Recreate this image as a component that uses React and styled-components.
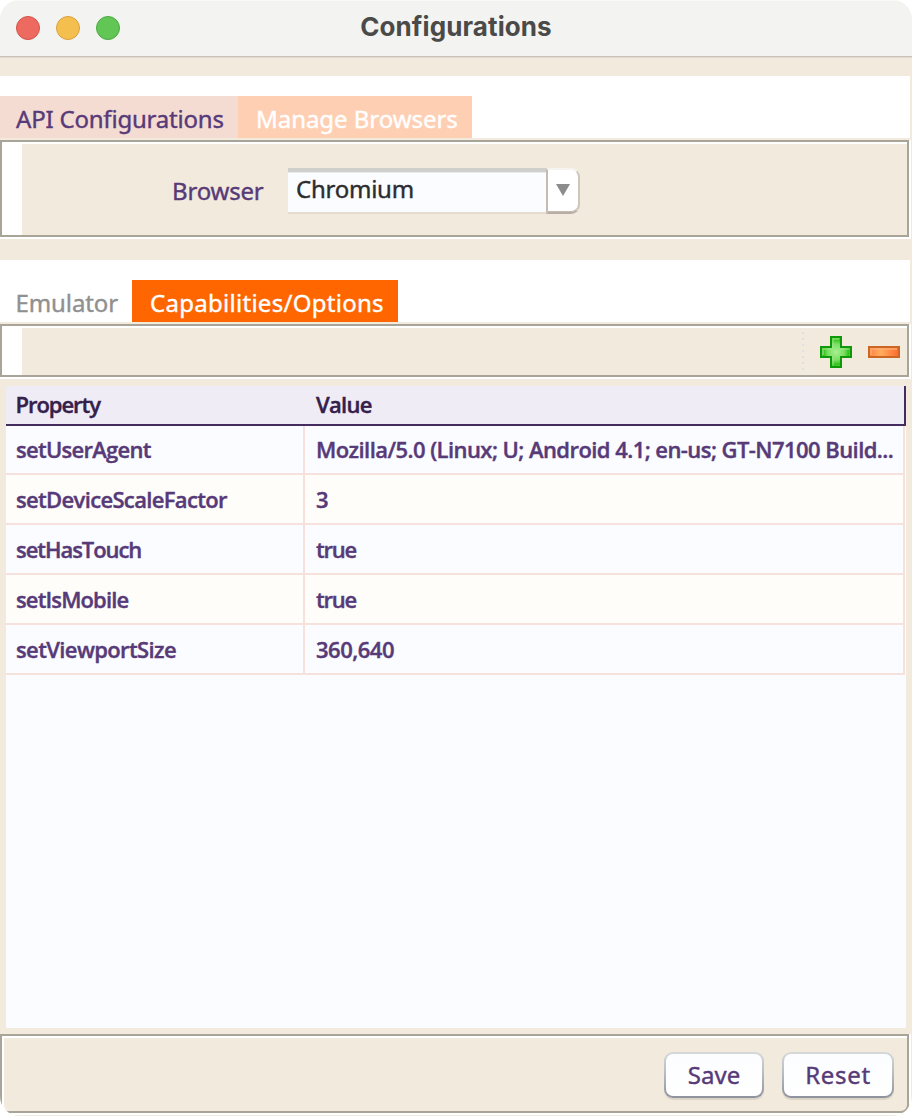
import React from 'react';
import styled, { createGlobalStyle } from 'styled-components';

const sand = '#f2eadd';
const plum = '#573a78';

const GlobalStyle = createGlobalStyle`
  * { box-sizing: border-box; }
  body { margin: 0; background: #fff; }
`;

const Window = styled.main`
  width: 912px;
  height: 1116px;
  display: flex;
  flex-direction: column;
  overflow: hidden;
  background: ${sand};
  border-radius: 20px;
  font-family: 'Noto Sans', sans-serif;
  font-size: 24px;
  color: ${plum};
  white-space: pre;
  -webkit-text-stroke: 0.4px currentColor;
`;

const TitleBar = styled.header`
  height: 58px;
  flex: none;
  display: grid;
  grid-template-columns: 160px 1fr 160px;
  align-items: center;
  padding-bottom: 3px;
  background: #f3f3f1;
  border-top: 1px solid #fafafa;
  box-shadow: inset 0 -1px #e0d8cc, inset 0 -2px #c9c3b9;
  -webkit-text-stroke: 0;
`;

const Lights = styled.div`
  display: flex;
  gap: 16px;
  padding-left: 16px;
`;

const Light = styled.span`
  width: 24px;
  height: 24px;
  border-radius: 50%;
  background: ${(p) => p.$fill};
  border: 1px solid ${(p) => p.$edge};
`;

const Title = styled.h1`
  margin: 0;
  padding-bottom: 2px;
  text-align: center;
  font: 700 26px/32px Inter, sans-serif;
  letter-spacing: ${(p) => p.$track}px;
  color: #4a4a48;
`;

const TabStrip = styled.nav`
  width: 910px;
  height: 62px;
  flex: none;
  display: flex;
  align-items: flex-end;
  margin-top: ${(p) => p.$top}px;
  margin-bottom: 2px;
  background: #fff;
`;

const Tab = styled.div`
  width: ${(p) => p.$width}px;
  height: 42px;
  padding-left: ${(p) => p.$inset}px;
  line-height: 45px;
  background: ${(p) => p.$fill};
  color: ${(p) => p.$color};
  letter-spacing: ${(p) => p.$track || 0}px;
`;

const PanelEdge = styled.section`
  width: 911px;
  height: ${(p) => p.$height}px;
  flex: none;
  border: solid #fff;
  border-width: 0 2px 2px 0;
`;

const Panel = styled.div`
  height: 100%;
  display: flex;
  align-items: center;
  border: 2px solid #a8a598;
  box-shadow: inset 0 2px #fff, inset ${(p) => p.$gutter}px 0 #fff;
  justify-content: ${(p) => p.$justify || 'flex-start'};
`;

const FooterPanel = styled(Panel)`
  border-radius: 0 0 8px 8px;
  padding: 0 13px 0 0;
  gap: 18px;
`;

const FieldLabel = styled.label`
  width: 116px;
  margin-left: 170px;
  padding-top: 4px;
  letter-spacing: -0.2px;
`;

const Combo = styled.div`
  display: flex;
  width: 292px;
  height: 46px;
  margin-top: 5px;
`;

const ComboValue = styled.div`
  width: 258px;
  padding-left: 8px;
  line-height: 34px;
  color: #2c2c30;
  letter-spacing: -0.25px;
  background: #fbfcff;
  border-top: 4px solid #cfd0ce;
  border-bottom: 2px solid #e3dccf;
  box-shadow: inset 0 1px #e8ebea;
`;

const ComboButton = styled.div`
  width: 34px;
  display: grid;
  place-items: center;
  padding-bottom: 3px;
  background: #fff;
  border: solid #b9ada4;
  border-width: 2px;
  border-color: #f6f4f1 #cfc7be #b9ada4 #c5bbb2;
  border-radius: 0 9px 9px 0;
  box-shadow: inset 0 -1px #c2b9b1;
`;

const Tools = styled.div`
  display: flex;
  align-items: center;
  padding: 3px 7px 0 0;
`;

const Separator = styled.i`
  width: 2px;
  height: 40px;
  margin-right: 16px;
  background: repeating-linear-gradient(#e0dfe2 0 2px, transparent 2px 6px);
`;

const Minus = styled.svg`
  margin-left: 16px;
`;

const Table = styled.section`
  width: 900px;
  height: 642px;
  flex: none;
  margin: 7px 0 6px 6px;
  background: #fbfcff;
  font-family: 'Open Sans', sans-serif;
  font-size: 22px;
  font-weight: 600;
`;

const HeaderRow = styled.div`
  height: 40px;
  display: grid;
  grid-template-columns: 299px 1fr;
  background: #efecf6;
  border: solid #452c5e;
  border-width: 0 2px 2px 0;
  color: #34204a;
`;

const HeaderCell = styled.div`
  padding-left: ${(p) => p.$inset}px;
  line-height: 36px;
  letter-spacing: ${(p) => p.$track}px;
`;

const Row = styled.div`
  width: 899px;
  height: ${(p) => (p.$first ? 49 : 50)}px;
  display: grid;
  grid-template-columns: 299px 1fr;
  align-items: stretch;
  background: ${(p) => (p.$warm ? '#fffdfa' : '#fbfcff')};
`;

const Cell = styled.div`
  padding: ${(p) => (p.$first ? 0 : 1)}px 0 0 ${(p) => p.$inset}px;
  line-height: 47px;
  letter-spacing: ${(p) => p.$track}px;
  border: solid #f6e1dc;
  border-width: 0 2px 2px 0;
`;

const Button = styled.button`
  width: ${(p) => p.$width}px;
  height: 46px;
  margin-top: 2px;
  padding: 0 0 1px;
  border: 2px solid transparent;
  border-radius: 9px;
  background:
    linear-gradient(#fcfdff, #fff) padding-box,
    linear-gradient(#d5d9da, #b4bac0 50%, #8d929d) border-box;
  box-shadow: 0 2px #dcd5c7;
  color: ${plum};
  font: 24px 'Noto Sans', sans-serif;
  letter-spacing: ${(p) => p.$track}px;
  -webkit-text-stroke: 0.4px currentColor;
`;

const rows = [
  { name: 'setUserAgent', value: 'Mozilla/5.0 (Linux; U; Android 4.1; en-us; GT-N7100 Build...', track: -0.73 },
  { name: 'setDeviceScaleFactor', value: '3', track: -0.66 },
  { name: 'setHasTouch', value: 'true', track: -1.05 },
  { name: 'setIsMobile', value: 'true', track: -0.87 },
  { name: 'setViewportSize', value: '360,640', track: -0.62 },
];

const valueTrack = { true: -1.2, '360,640': -0.5 };

export default function App() {
  return (
    <>
      <GlobalStyle />
      <Window>
        <TitleBar>
          <Lights>
            <Light $fill="#ec6a5f" $edge="#d3524a" />
            <Light $fill="#f5bf4f" $edge="#d9a13e" />
            <Light $fill="#62c655" $edge="#4da83f" />
          </Lights>
          <Title $track={0.1}>Configurations</Title>
        </TitleBar>

        <TabStrip $top={18}>
          <Tab $width={238} $inset={16} $fill="#f5dcd3" $color={plum} $track={-0.2}>API Configurations</Tab>
          <Tab $width={234} $inset={18} $fill="#ffcfb3" $color="#fff" $track={-0.05}>Manage Browsers</Tab>
        </TabStrip>
        <PanelEdge $height={99}>
          <Panel $gutter={20}>
            <FieldLabel>Browser</FieldLabel>
            <Combo>
              <ComboValue>Chromium</ComboValue>
              <ComboButton>
                <svg width="14" height="12" viewBox="0 0 14 12"><path d="M0 0h14L7 12z" fill="#8c8c8c" /></svg>
              </ComboButton>
            </Combo>
          </Panel>
        </PanelEdge>

        <TabStrip $top={21}>
          <Tab $width={132} $inset={15.5} $fill="#fff" $color="#909090" $track={-0.1}>Emulator</Tab>
          <Tab $width={266} $inset={18} $fill="#ff6600" $color="#fff" $track={0.28}>Capabilities/Options</Tab>
        </TabStrip>
        <PanelEdge $height={55}>
          <Panel $gutter={20} $justify="flex-end">
            <Tools>
              <Separator />
              <svg width="32" height="32" viewBox="0 0 32 32">
                <defs>
                  <radialGradient id="leaf">
                    <stop offset="0" stopColor="#a9ef91" />
                    <stop offset=".55" stopColor="#7ade63" />
                    <stop offset=".85" stopColor="#31c119" />
                    <stop offset="1" stopColor="#70d95b" />
                  </radialGradient>
                </defs>
                <path d="M11 1h10v10h10v10H21v10H11V21H1V11h10z" fill="url(#leaf)" stroke="#10980b" strokeWidth="2" />
                <path d="M13 13V3h6M3 19v-6h10M19 13h10M13 29v-8" fill="none" stroke="#a5ea91" strokeWidth="1.5" opacity=".65" />
              </svg>
              <Minus width="32" height="12" viewBox="0 0 32 12">
                <defs>
                  <linearGradient id="ember">
                    <stop offset="0" stopColor="#ff8144" />
                    <stop offset=".4" stopColor="#ffad5e" />
                    <stop offset=".7" stopColor="#ff8b43" />
                    <stop offset="1" stopColor="#ff6534" />
                  </linearGradient>
                </defs>
                <path d="M1 1h30v10H1z" fill="url(#ember)" stroke="#cc6622" strokeWidth="2" />
                <path d="M3 9V3h26" fill="none" stroke="#ffac73" strokeWidth="2" opacity=".7" />
              </Minus>
            </Tools>
          </Panel>
        </PanelEdge>

        <Table>
          <HeaderRow>
            <HeaderCell $inset={9.5} $track={-1.05}>Property</HeaderCell>
            <HeaderCell $inset={11} $track={-0.7}>Value</HeaderCell>
          </HeaderRow>
          {rows.map(({ name, value, track }, i) => (
            <Row key={name} $first={i === 0} $warm={i % 2 === 1}>
              <Cell $first={i === 0} $inset={10} $track={track}>{name}</Cell>
              <Cell $first={i === 0} $inset={11} $track={valueTrack[value] ?? -0.56}>{value}</Cell>
            </Row>
          ))}
        </Table>

        <PanelEdge $height={81}>
          <FooterPanel $gutter={2} $justify="flex-end">
            <Button $width={100} $track={0}>Save</Button>
            <Button $width={112} $track={0.7}>Reset</Button>
          </FooterPanel>
        </PanelEdge>
      </Window>
    </>
  );
}
